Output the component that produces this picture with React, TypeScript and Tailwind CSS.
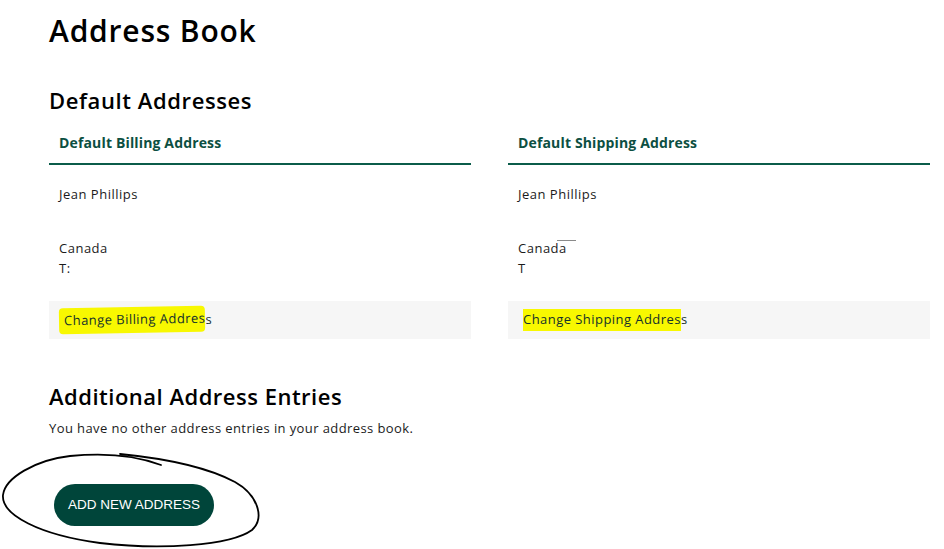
import React from 'react'

const AddressCard = ({
    title,
    phone,
    action,
    hl,
    mark,
}: {
    title: string
    phone: string
    action: string
    hl: string
    mark?: boolean
}) => {
    return (
        <div className="flex flex-col w-[422px]">
            <div className="px-[10px] pt-[10px] pb-[10px] border-b-2 border-[#0b5c4a]">
                <h3 className="text-[14px] leading-[20px] font-bold tracking-[0.15px] text-[#0c4f42]">{title}</h3>
            </div>
            <div className="px-[10px] mt-[19px] text-[13px] leading-[20px] tracking-[0.5px] text-[#1b1b1b]">
                <p>Jean Phillips</p>
                <p className="mt-[34px] relative w-fit">
                    Canada
                    {mark && (
                        <span className="absolute left-[39px] top-[2px] w-[19px] h-px bg-[#8a8a8a]" />
                    )}
                </p>
                <p>{phone}</p>
            </div>
            <div className="mt-[23px] h-[38px] bg-[#f6f6f6] flex items-center px-[15px] text-[13px] tracking-[0.45px] text-[#14312b]">
                <span className={hl}>{action.slice(0, -1)}</span>
                <span>{action.slice(-1)}</span>
            </div>
        </div>
    )
}

const App = () => {
    return (
        <div
            className="relative w-[944px] h-[549px] bg-white overflow-hidden pl-[49px] pr-[13px] pt-[11px]"
            style={{ fontFamily: '"Open Sans", "Noto Sans", sans-serif' }}
        >
            <h1 className="text-[30px] leading-[40px] font-semibold tracking-[0.8px] text-black">Address Book</h1>
            <h2 className="mt-[34px] text-[22px] leading-[30px] font-semibold tracking-[0.6px] text-black">Default Addresses</h2>
            <div className="mt-[8px] flex gap-[37px]">
                <AddressCard
                    title="Default Billing Address"
                    phone="T:"
                    action="Change Billing Address"
                    hl="bg-[#f8f800] pl-[5px] -ml-[5px] py-[3px] rounded-sm -rotate-[1deg]"
                />
                <AddressCard
                    title="Default Shipping Address"
                    phone="T"
                    action="Change Shipping Address"
                    hl="bg-[#f8f800] py-[1px]"
                    mark
                />
            </div>
            <h2 className="mt-[42px] text-[22px] leading-[30px] font-semibold tracking-[0.5px] text-black">Additional Address Entries</h2>
            <p className="mt-[7px] text-[13px] leading-[20px] tracking-[0.4px] text-[#1b1b1b]">
                You have no other address entries in your address book.
            </p>
            <button
                className="mt-[46px] ml-[5px] w-[160px] h-[42px] rounded-full bg-[#00453a] text-white text-[13.5px] uppercase"
                style={{ fontFamily: '"Liberation Sans", Arial, sans-serif' }}
            >
                Add New Address
            </button>
            {/* hand-drawn circle around the button */}
            <svg className="absolute left-0 top-0 pointer-events-none" width="944" height="549" viewBox="0 0 944 549" fill="none">
                <path
                    d="M161,465 C140,457 110,452 70,456 C35,460 5,478 3,495 C1,515 40,535 100,543 C160,550 230,546 252,530 C265,518 258,495 235,482 C205,466 160,458 120,454"
                    stroke="#000"
                    strokeWidth="1.8"
                    strokeLinecap="round"
                />
            </svg>
        </div>
    )
}

export default App
